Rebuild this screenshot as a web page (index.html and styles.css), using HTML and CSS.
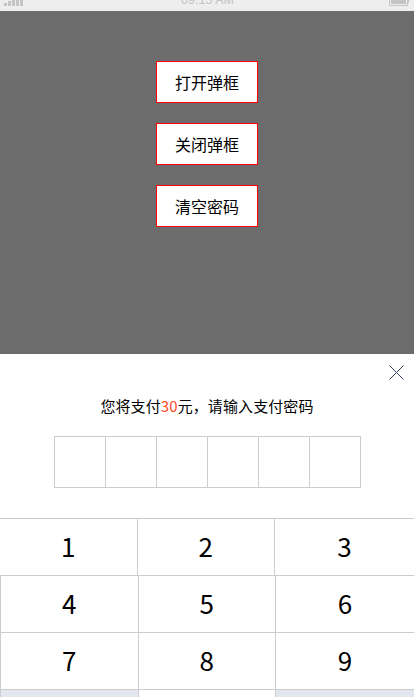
FILE: index.html
```html
<!DOCTYPE html>
<html lang="zh-CN">
<head>
    <meta charset="UTF-8">
    <meta name="viewport" content="width=device-width, initial-scale=1.0">
    <title>支付密码弹框</title>
    <link rel="stylesheet" href="styles.css">
</head>
<body>
    <div class="page">
        <!-- Status bar, cut off at the top -->
        <div class="status-bar">
            <svg class="signal" width="20" height="6" viewBox="0 0 20 6">
                <rect x="0" y="3" width="3" height="3"/>
                <rect x="4" y="1" width="3" height="5"/>
                <rect x="8" y="0" width="3" height="6"/>
                <rect x="12" y="0" width="3" height="6"/>
                <rect x="16" y="0" width="3" height="6"/>
            </svg>
            <span class="time">09:15 AM</span>
            <svg class="battery" width="20" height="6" viewBox="0 0 20 6">
                <path d="M0.5 0V5.5H18.5V0" fill="none" stroke="#c4c4c4"/>
                <rect x="2" y="0" width="15" height="4"/>
                <rect x="19" y="0" width="1" height="3"/>
            </svg>
        </div>

        <div class="mask">
            <button class="btn">打开弹框</button>
            <button class="btn">关闭弹框</button>
            <button class="btn">清空密码</button>
        </div>

        <!-- Pay popup -->
        <div class="pay-box">
            <div class="close-row">
                <svg class="close" width="15" height="15" viewBox="0 0 15 15">
                    <path d="M0.5 0.5L14.5 14.5M14.5 0.5L0.5 14.5" stroke="#33425e" stroke-width="1" fill="none"/>
                </svg>
            </div>
            <p class="pay-title">您将支付<span class="price">30</span>元，请输入支付密码</p>
            <div class="pwd-box">
                <div class="pwd-cell"></div>
                <div class="pwd-cell"></div>
                <div class="pwd-cell"></div>
                <div class="pwd-cell"></div>
                <div class="pwd-cell"></div>
                <div class="pwd-cell"></div>
            </div>
            <div class="keys keys-first">
                <div class="key">1</div>
                <div class="key">2</div>
                <div class="key">3</div>
            </div>
            <div class="keys">
                <div class="key">4</div>
                <div class="key">5</div>
                <div class="key">6</div>
            </div>
            <div class="keys">
                <div class="key">7</div>
                <div class="key">8</div>
                <div class="key">9</div>
            </div>
            <div class="keys">
                <div class="key key-gray"></div>
                <div class="key"></div>
                <div class="key key-gray"></div>
            </div>
        </div>
    </div>
</body>
</html>
```

FILE: styles.css
```css
html, body {
    margin: 0;
    padding: 0;
    height: 100%;
    overflow: hidden;
    background: #fff;
}
body {
    font-family: "Noto Sans CJK SC", "Noto Sans", sans-serif;
    color: #000;
}
.page {
    width: 414px;
    height: 697px;
    overflow: hidden;
}
.status-bar {
    height: 11px;
    background: #eee;
    display: flex;
    justify-content: space-between;
    align-items: flex-start;
    padding: 0 5px 0 4px;
    overflow: hidden;
}
.signal {
    fill: #c4c4c4;
}
.battery {
    fill: #c4c4c4;
}
.time {
    font-family: "Liberation Sans", Arial, sans-serif;
    font-size: 12.5px;
    line-height: 14px;
    margin: -7px 0 0 2px;
    color: #c4c4c4;
}
.mask {
    height: 343px;
    background: #6c6c6c;
    display: flex;
    flex-direction: column;
    align-items: center;
    gap: 20px;
    padding-top: 50px;
    box-sizing: border-box;
}
.btn {
    width: 102px;
    height: 42px;
    padding: 0;
    background: #fff;
    border: 1px solid #f00;
    color: #000;
    font-family: inherit;
    font-size: 16px;
}
.pay-box {
    background: #fff;
}
.close-row {
    display: flex;
    justify-content: flex-end;
    padding: 11px 10px 0 0;
    height: 26px;
}
.close {
    display: block;
}
.pay-title {
    margin: 2px 0 0;
    font-size: 15px;
    line-height: 26px;
    letter-spacing: 0.1px;
    text-align: center;
    color: #000;
}
.price {
    color: #ff4a25;
}
.pwd-box {
    display: flex;
    width: 307px;
    height: 52px;
    box-sizing: border-box;
    margin: 17px 0 0 54px;
    border: 1px solid #ccc;
    border-right: 0;
}
.pwd-cell {
    width: 51px;
    box-sizing: border-box;
    border-right: 1px solid #ccc;
}
.keys {
    display: flex;
    height: 57px;
    box-sizing: border-box;
    border-top: 1px solid #ccc;
}
.keys-first {
    margin-top: 30px;
}
.key {
    width: 137.5px;
    box-sizing: border-box;
    border-left: 1px solid #ccc;
    font-size: 26px;
    line-height: 54px;
    text-align: center;
}
.key:last-child {
    flex: 1;
}
.key-gray {
    background: #e2e6ee;
}
.keys-first .key {
    border-left: 0;
    border-right: 1px solid #ccc;
}
.keys-first .key:last-child {
    border-right: 0;
}
```
